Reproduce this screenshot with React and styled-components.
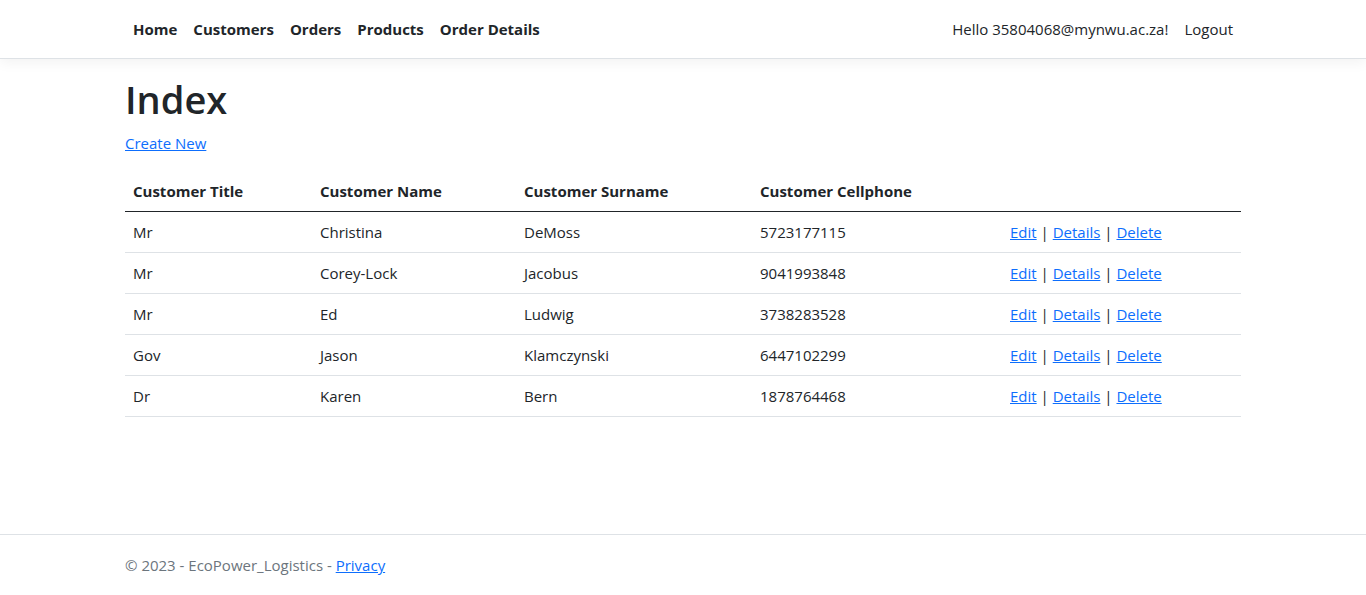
import React from "react";
import styled, { createGlobalStyle } from "styled-components";

const GlobalStyle = createGlobalStyle`
  html, body {
    margin: 0;
    padding: 0;
  }
  body {
    font-family: "Segoe UI", "Open Sans", "Liberation Sans", sans-serif;
    font-size: 15px;
    line-height: 24px;
    color: #212529;
    background: #fff;
  }
  * {
    box-sizing: border-box;
  }
`;

const customers = [
  { title: "Mr", name: "Christina", surname: "DeMoss", phone: "5723177115" },
  { title: "Mr", name: "Corey-Lock", surname: "Jacobus", phone: "9041993848" },
  { title: "Mr", name: "Ed", surname: "Ludwig", phone: "3738283528" },
  { title: "Gov", name: "Jason", surname: "Klamczynski", phone: "6447102299" },
  { title: "Dr", name: "Karen", surname: "Bern", phone: "1878764468" },
];

const navItems = ["Home", "Customers", "Orders", "Products", "Order Details"];

const App = () => {
  return (
    <Page>
      <GlobalStyle />
      <Header>
        <Container>
          <NavBar>
            <NavList>
              {navItems.map((item) => (
                <NavLink key={item} href="#" $bold>
                  {item}
                </NavLink>
              ))}
            </NavList>
            <NavList>
              <NavText>Hello 35804068@mynwu.ac.za!</NavText>
              <NavLink href="#">Logout</NavLink>
            </NavList>
          </NavBar>
        </Container>
      </Header>

      <Main>
        <Container>
          <Title>Index</Title>
          <Para>
            <Link href="#">Create New</Link>
          </Para>
          <Table>
            <colgroup>
              <col style={{ width: 187 }} />
              <col style={{ width: 204 }} />
              <col style={{ width: 236 }} />
              <col style={{ width: 250 }} />
              <col />
            </colgroup>
            <thead>
              <tr>
                <Th>Customer Title</Th>
                <Th>Customer Name</Th>
                <Th>Customer Surname</Th>
                <Th>Customer Cellphone</Th>
                <Th></Th>
              </tr>
            </thead>
            <tbody>
              {customers.map((c) => (
                <tr key={c.phone}>
                  <Td>{c.title}</Td>
                  <Td>{c.name}</Td>
                  <Td>{c.surname}</Td>
                  <Td>{c.phone}</Td>
                  <Td>
                    <Link href="#">Edit</Link> |{" "}
                    <Link href="#">Details</Link> |{" "}
                    <Link href="#">Delete</Link>
                  </Td>
                </tr>
              ))}
            </tbody>
          </Table>
        </Container>
      </Main>

      <Footer>
        <Container>
          &copy; 2023 - EcoPower_Logistics - <Link href="#">Privacy</Link>
        </Container>
      </Footer>
    </Page>
  );
};

export default App;

const Page = styled.div`
  min-height: 100vh;
  display: flex;
  flex-direction: column;
`;

const Container = styled.div`
  width: 100%;
  max-width: 1140px;
  margin: 0 auto;
  padding: 0 12px;
`;

const Header = styled.header`
  background: #fff;
  border-bottom: 1px solid #dee2e6;
  box-shadow: 0 4px 12px rgba(0, 0, 0, 0.05);
  padding: 8px 0;
  margin-bottom: 16px;
`;

const NavBar = styled.nav`
  display: flex;
  justify-content: space-between;
  align-items: center;
  min-height: 42px;
`;

const NavList = styled.div`
  display: flex;
  align-items: center;
`;

const NavLink = styled.a`
  display: block;
  padding: 8px;
  color: #212529;
  text-decoration: none;
  font-weight: ${(p) => (p.$bold ? 700 : 400)};
`;

const NavText = styled.span`
  padding: 8px;
  color: #212529;
`;

const Main = styled.main`
  flex: 1;
  padding-bottom: 16px;
`;

const Title = styled.h1`
  margin: 0 0 8px;
  font-size: 38px;
  font-weight: 600;
  line-height: 48px;
`;

const Para = styled.p`
  margin: 0 0 16px;
`;

const Link = styled.a`
  color: #0d6efd;
  text-decoration: underline;
`;

const Table = styled.table`
  width: 100%;
  border-collapse: collapse;
  margin-bottom: 16px;
  vertical-align: top;
`;

const Th = styled.th`
  text-align: left;
  font-weight: 700;
  padding: 8px;
  border-bottom: 1px solid #212529;
`;

const Td = styled.td`
  padding: 8px;
  border-bottom: 1px solid #dee2e6;
`;

const Footer = styled.footer`
  border-top: 1px solid #dee2e6;
  line-height: 60px;
  color: #6c757d;
  white-space: nowrap;
`;
